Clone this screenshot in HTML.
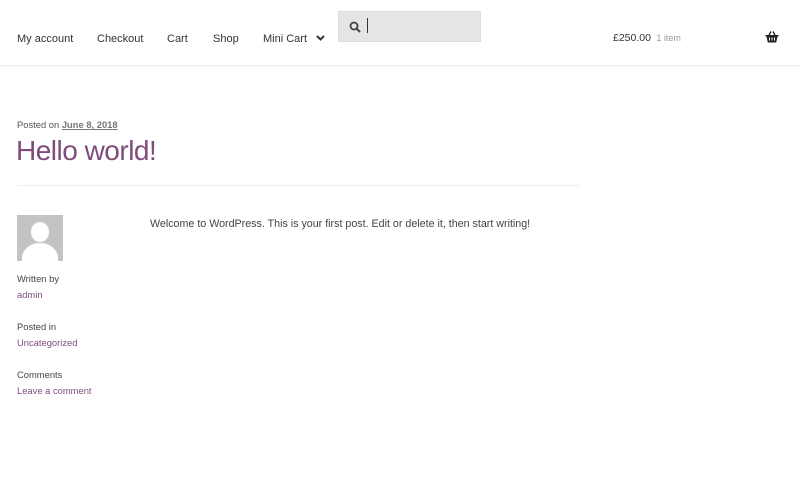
<!DOCTYPE html>
<html><head><meta charset="utf-8"><style>
*{margin:0;padding:0;box-sizing:border-box}
body{width:800px;height:500px;background:#fff;font-family:"Liberation Sans",sans-serif;color:#43454b;position:relative;overflow:hidden}
.a{position:absolute;white-space:nowrap}
.nav{font-size:11px;color:#333;top:33px}
.hdr{position:absolute;left:0;top:65px;width:800px;height:2px;background:#f2f2f2}
.small{font-size:9.4px}
.p{color:#7f4d7b}
</style></head><body>
<div class="a nav" style="left:17px">My account</div>
<div class="a nav" style="left:97px">Checkout</div>
<div class="a nav" style="left:167px">Cart</div>
<div class="a nav" style="left:213px">Shop</div>
<div class="a nav" style="left:263px">Mini Cart</div>
<svg class="a" style="left:316px;top:35px" width="9" height="6" viewBox="0 0 9 6"><path d="M1 1l3.5 3.5L8 1" stroke="#333" stroke-width="2" fill="none"/></svg>
<div class="a" style="left:338px;top:11px;width:143px;height:31px;background:#e5e5e5;border:1px solid #ddd"></div>
<svg class="a" style="left:349px;top:21px" width="12" height="12" viewBox="0 0 12 12"><circle cx="5" cy="5" r="3.5" stroke="#444" stroke-width="1.8" fill="none"/><path d="M7.5 7.5L11 11" stroke="#444" stroke-width="2"/></svg>
<div class="a" style="left:367px;top:18px;width:1px;height:15px;background:#333"></div>
<div class="a" style="left:613px;top:32px;font-size:10.5px;color:#333">£250.00 <span style="color:#999;font-size:9px">&nbsp;1 item</span></div>
<svg class="a" style="left:765px;top:31px" width="14" height="12" viewBox="0 0 14 12"><path d="M4 4L6 0.5M10 4L8 0.5" stroke="#222" stroke-width="1.3"/><path d="M0.5 4h13v1.5h-1l-1.3 6H2.8l-1.3-6h-1z" fill="#222"/><path d="M4.5 6.5v3M7 6.5v3M9.5 6.5v3" stroke="#fff" stroke-width="1"/></svg>
<div class="hdr"></div>
<div class="a small" style="left:17px;top:119px;color:#555">Posted on <span style="text-decoration:underline;font-weight:bold;color:#777">June 8, 2018</span></div>
<div class="a p" style="left:16px;top:135px;font-size:28px;font-weight:300;letter-spacing:-0.5px">Hello world!</div>
<div class="a" style="left:17px;top:185px;width:563px;height:1px;background:#eee"></div>
<div class="a" style="left:17px;top:215px;width:46px;height:46px;background:#c4c4c4;overflow:hidden">
<div style="position:absolute;left:14px;top:7px;width:18px;height:20px;border-radius:50%;background:#fff"></div>
<div style="position:absolute;left:5px;top:28px;width:36px;height:30px;border-radius:50% 50% 0 0;background:#fff"></div></div>
<div class="a" style="left:150px;top:218px;font-size:10.7px;color:#444">Welcome to WordPress. This is your first post. Edit or delete it, then start writing!</div>
<div class="a small" style="left:17px;top:273px">Written by</div>
<div class="a small p" style="left:17px;top:289px">admin</div>
<div class="a small" style="left:17px;top:321px">Posted in</div>
<div class="a small p" style="left:17px;top:337px">Uncategorized</div>
<div class="a small" style="left:17px;top:369px">Comments</div>
<div class="a small p" style="left:17px;top:385px">Leave a comment</div>
</body></html>
